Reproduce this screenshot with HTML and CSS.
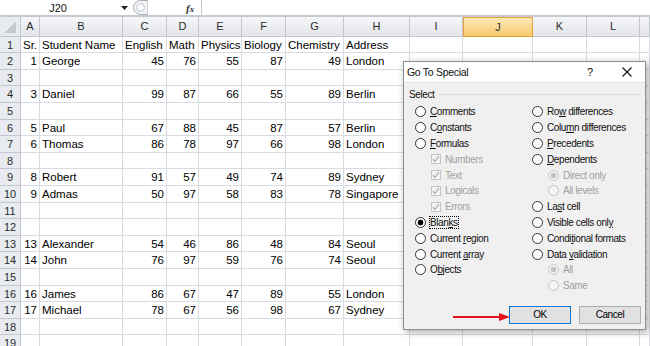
FILE: index.html
```html
<!DOCTYPE html>
<html lang="en">

<head>
    <meta charset="UTF-8">
    <meta name="viewport" content="width=device-width, initial-scale=1.0">
    <title>Go To Special - Blanks</title>
    <link rel="stylesheet" href="styles.css">
</head>

<body>
    <!-- Formula bar -->
    <div class="formula-bar">
        <div class="name-box">J20</div>
        <div class="name-arrow">
            <svg width="7" height="4" viewBox="0 0 7 4"><path d="M0 0h7L3.5 4z" fill="#222"/></svg>
        </div>
        <div class="splitter">
            <svg width="15" height="15" viewBox="0 0 15 15">
                <path d="M7.5 0.5A7 7 0 0 0 7.5 14.5H15V0.5z" fill="#f1f2f5" stroke="#a9aeb5"/>
                <circle cx="7.5" cy="7.5" r="4" fill="#fbfbfc" stroke="#bfc3c9"/>
            </svg>
        </div>
        <div class="fx">f<span>x</span></div>
        <div class="formula-input"></div>
    </div>

    <!-- Sheet -->
    <div class="sheet">
        <div class="row head">
            <span class="corner"></span><span>A</span><span>B</span><span>C</span><span>D</span><span>E</span><span>F</span><span>G</span><span>H</span><span>I</span><span class="sel">J</span><span>K</span><span>L</span><span></span>
        </div>
        <div class="row">
            <span class="rh">1</span><span>Sr.</span><span>Student Name</span><span>English</span><span>Math</span><span>Physics</span><span>Biology</span><span>Chemistry</span><span>Address</span><span></span><span></span><span></span><span></span><span></span>
        </div>
        <div class="row">
            <span class="rh">2</span><span class="n">1</span><span>George</span><span class="n">45</span><span class="n">76</span><span class="n">55</span><span class="n">87</span><span class="n">49</span><span>London</span><span></span><span></span><span></span><span></span><span></span>
        </div>
        <div class="row">
            <span class="rh">3</span><span></span><span></span><span></span><span></span><span></span><span></span><span></span><span></span><span></span><span></span><span></span><span></span><span></span>
        </div>
        <div class="row">
            <span class="rh">4</span><span class="n">3</span><span>Daniel</span><span class="n">99</span><span class="n">87</span><span class="n">66</span><span class="n">55</span><span class="n">89</span><span>Berlin</span><span></span><span></span><span></span><span></span><span></span>
        </div>
        <div class="row">
            <span class="rh">5</span><span></span><span></span><span></span><span></span><span></span><span></span><span></span><span></span><span></span><span></span><span></span><span></span><span></span>
        </div>
        <div class="row">
            <span class="rh">6</span><span class="n">5</span><span>Paul</span><span class="n">67</span><span class="n">88</span><span class="n">45</span><span class="n">87</span><span class="n">57</span><span>Berlin</span><span></span><span></span><span></span><span></span><span></span>
        </div>
        <div class="row">
            <span class="rh">7</span><span class="n">6</span><span>Thomas</span><span class="n">86</span><span class="n">78</span><span class="n">97</span><span class="n">66</span><span class="n">98</span><span>London</span><span></span><span></span><span></span><span></span><span></span>
        </div>
        <div class="row">
            <span class="rh">8</span><span></span><span></span><span></span><span></span><span></span><span></span><span></span><span></span><span></span><span></span><span></span><span></span><span></span>
        </div>
        <div class="row">
            <span class="rh">9</span><span class="n">8</span><span>Robert</span><span class="n">91</span><span class="n">57</span><span class="n">49</span><span class="n">74</span><span class="n">89</span><span>Sydney</span><span></span><span></span><span></span><span></span><span></span>
        </div>
        <div class="row">
            <span class="rh">10</span><span class="n">9</span><span>Admas</span><span class="n">50</span><span class="n">97</span><span class="n">58</span><span class="n">83</span><span class="n">78</span><span>Singapore</span><span></span><span></span><span></span><span></span><span></span>
        </div>
        <div class="row">
            <span class="rh">11</span><span></span><span></span><span></span><span></span><span></span><span></span><span></span><span></span><span></span><span></span><span></span><span></span><span></span>
        </div>
        <div class="row">
            <span class="rh">12</span><span></span><span></span><span></span><span></span><span></span><span></span><span></span><span></span><span></span><span></span><span></span><span></span><span></span>
        </div>
        <div class="row">
            <span class="rh">13</span><span class="n">13</span><span>Alexander</span><span class="n">54</span><span class="n">46</span><span class="n">86</span><span class="n">48</span><span class="n">84</span><span>Seoul</span><span></span><span></span><span></span><span></span><span></span>
        </div>
        <div class="row">
            <span class="rh">14</span><span class="n">14</span><span>John</span><span class="n">76</span><span class="n">97</span><span class="n">59</span><span class="n">76</span><span class="n">74</span><span>Seoul</span><span></span><span></span><span></span><span></span><span></span>
        </div>
        <div class="row">
            <span class="rh">15</span><span></span><span></span><span></span><span></span><span></span><span></span><span></span><span></span><span></span><span></span><span></span><span></span><span></span>
        </div>
        <div class="row">
            <span class="rh">16</span><span class="n">16</span><span>James</span><span class="n">86</span><span class="n">67</span><span class="n">47</span><span class="n">89</span><span class="n">55</span><span>London</span><span></span><span></span><span></span><span></span><span></span>
        </div>
        <div class="row">
            <span class="rh">17</span><span class="n">17</span><span>Michael</span><span class="n">78</span><span class="n">67</span><span class="n">56</span><span class="n">98</span><span class="n">67</span><span>Sydney</span><span></span><span></span><span></span><span></span><span></span>
        </div>
        <div class="row">
            <span class="rh">18</span><span></span><span></span><span></span><span></span><span></span><span></span><span></span><span></span><span></span><span></span><span></span><span></span><span></span>
        </div>
        <div class="row">
            <span class="rh">19</span><span></span><span></span><span></span><span></span><span></span><span></span><span></span><span></span><span></span><span></span><span></span><span></span><span></span>
        </div>
    </div>

    <!-- Go To Special dialog -->
    <div class="dialog">
        <div class="title">
            <span>Go To Special</span>
            <span class="help">?</span>
            <span class="close">
                <svg width="10" height="10" viewBox="0 0 10 10"><path d="M0.5 0.5l9 9M9.5 0.5l-9 9" stroke="#111" stroke-width="1.1"/></svg>
            </span>
        </div>
        <div class="body">
            <div class="legend"><span>Select</span></div>
            <div class="options">
                <div class="col">
                    <div class="opt"><i class="radio"></i><span><u>C</u>omments</span></div>
                    <div class="opt"><i class="radio"></i><span>C<u>o</u>nstants</span></div>
                    <div class="opt"><i class="radio"></i><span><u>F</u>ormulas</span></div>
                    <div class="opt sub off"><i class="check"><svg width="8" height="8" viewBox="0 0 8 8"><path d="M0.8 4.2l2.2 2.2 4.2-5.4" fill="none" stroke="#a9a9a9" stroke-width="1.1"/></svg></i><span>Numbers</span></div>
                    <div class="opt sub off"><i class="check"><svg width="8" height="8" viewBox="0 0 8 8"><path d="M0.8 4.2l2.2 2.2 4.2-5.4" fill="none" stroke="#a9a9a9" stroke-width="1.1"/></svg></i><span>Text</span></div>
                    <div class="opt sub off"><i class="check"><svg width="8" height="8" viewBox="0 0 8 8"><path d="M0.8 4.2l2.2 2.2 4.2-5.4" fill="none" stroke="#a9a9a9" stroke-width="1.1"/></svg></i><span>Logicals</span></div>
                    <div class="opt sub off"><i class="check"><svg width="8" height="8" viewBox="0 0 8 8"><path d="M0.8 4.2l2.2 2.2 4.2-5.4" fill="none" stroke="#a9a9a9" stroke-width="1.1"/></svg></i><span>Errors</span></div>
                    <div class="opt"><i class="radio on"></i><span class="focus">Blan<u>k</u>s</span></div>
                    <div class="opt"><i class="radio"></i><span>Current <u>r</u>egion</span></div>
                    <div class="opt"><i class="radio"></i><span>Current <u>a</u>rray</span></div>
                    <div class="opt"><i class="radio"></i><span>O<u>b</u>jects</span></div>
                </div>
                <div class="col">
                    <div class="opt"><i class="radio"></i><span>Ro<u>w</u> differences</span></div>
                    <div class="opt"><i class="radio"></i><span>Colu<u>m</u>n differences</span></div>
                    <div class="opt"><i class="radio"></i><span><u>P</u>recedents</span></div>
                    <div class="opt"><i class="radio"></i><span><u>D</u>ependents</span></div>
                    <div class="opt sub off"><i class="radio on"></i><span>Direct only</span></div>
                    <div class="opt sub off"><i class="radio"></i><span>All levels</span></div>
                    <div class="opt"><i class="radio"></i><span>La<u>s</u>t cell</span></div>
                    <div class="opt"><i class="radio"></i><span>Visible cells onl<u>y</u></span></div>
                    <div class="opt"><i class="radio"></i><span>Condi<u>t</u>ional formats</span></div>
                    <div class="opt"><i class="radio"></i><span>Data <u>v</u>alidation</span></div>
                    <div class="opt sub off"><i class="radio on"></i><span>All</span></div>
                    <div class="opt sub off"><i class="radio"></i><span>Same</span></div>
                </div>
            </div>
            <div class="buttons">
                <button class="ok">OK</button>
                <button>Cancel</button>
            </div>
        </div>
        <!-- annotation arrow -->
        <svg class="arrow" width="58" height="10" viewBox="0 0 58 10">
            <path d="M0 5H48" stroke="#e3131b" stroke-width="2"/>
            <path d="M46 1L57 5L46 9z" fill="#e3131b"/>
        </svg>
    </div>
</body>
</html>
```

FILE: styles.css
```css
body {
    margin: 0;
    width: 650px;
    height: 346px;
    overflow: hidden;
    position: relative;
    background: #fff;
    font-family: 'Liberation Sans', Arial, sans-serif;
    color: #000;
}

/* formula bar */
.formula-bar {
    display: flex;
    align-items: center;
    height: 15px;
    border-bottom: 2px solid #c6cad0;
    font-size: 11px;
}

.name-box {
    width: 116px;
    text-align: center;
    color: #111;
}

.name-arrow {
    width: 17px;
    display: flex;
    justify-content: center;
}

.splitter {
    width: 15px;
    height: 15px;
}

.splitter svg {
    display: block;
}

.fx {
    margin-left: 38px;
    width: 15px;
    font-family: 'Liberation Serif', serif;
    font-style: italic;
    font-weight: bold;
    font-size: 11px;
    color: #333;
}

.fx span {
    font-size: 9px;
}

.formula-input {
    flex: 1;
    height: 15px;
    border-left: 1px solid #c6cad0;
}

/* sheet grid */
.row {
    display: grid;
    grid-template-columns: 21px 19px 83px 44px 32px 43px 44px 58px 66px 53px 70px 54px 53px 1fr;
    height: 16.6px;
    font-size: 11.5px;
}

.row span {
    box-sizing: border-box;
    border-right: 1px solid #d9dbde;
    border-bottom: 1px solid #d9dbde;
    padding: 0 2px;
    line-height: 16.2px;
    white-space: nowrap;
    overflow: hidden;
}

.row .n {
    text-align: right;
}

.row .rh {
    background: #e8ebef;
    border-color: #c3c7cd;
    text-align: center;
    padding: 0;
    font-size: 11px;
    color: #2b2b2b;
}

.head {
    height: 19.7px;
}

.head span {
    background: linear-gradient(#f6f7f9, #e2e5e9);
    border-color: #c3c7cd;
    text-align: center;
    line-height: 18.7px;
    font-size: 11px;
    color: #2b2b2b;
}

.head .corner {
    background:
        linear-gradient(to bottom right, transparent 50%, #c5c9cf 50%) right 4px bottom 3px / 11px 11px no-repeat,
        #e8ebef;
}

.head .sel {
    background: linear-gradient(#fde9b4, #f7c96e);
    border: 1px solid #e3a23e;
}

/* dialog */
.dialog {
    position: absolute;
    left: 403px;
    top: 61px;
    width: 243px;
    height: 269px;
    box-sizing: border-box;
    border: 1px solid #8e8e8e;
    background: #f0f0f0;
    box-shadow: 2px 2px 7px rgba(0, 0, 0, 0.35);
    display: flex;
    flex-direction: column;
    font-size: 10px;
    letter-spacing: -0.4px;
    color: #111;
}

.title {
    display: flex;
    align-items: center;
    height: 20px;
    padding-left: 3px;
    background: #fff;
    border-bottom: 1px solid #e4e4e4;
    font-size: 10.5px;
    letter-spacing: -0.3px;
}

.help {
    margin-left: auto;
    width: 30px;
    text-align: center;
    font-size: 11px;
}

.close {
    width: 36px;
    margin-left: 4px;
    display: flex;
    justify-content: center;
}

.body {
    flex: 1;
    padding: 5px 4px 0 5px;
}

.legend {
    display: flex;
    align-items: center;
    gap: 5px;
    height: 12px;
}

.legend::after {
    content: "";
    flex: 1;
    border-top: 1px solid #d9d9d9;
}

.options {
    display: grid;
    grid-template-columns: 117px 1fr;
    margin-top: 4px;
    padding-left: 6px;
}

.col {
    display: grid;
    grid-auto-rows: 15.8px;
}

.opt {
    display: flex;
    align-items: center;
    gap: 4px;
    white-space: nowrap;
}

.opt.sub {
    padding-left: 16px;
}

.opt.off {
    color: #a0a0a0;
}

.radio {
    width: 11px;
    height: 11px;
    box-sizing: border-box;
    border: 1px solid #333;
    border-radius: 50%;
    background: #fff;
    flex: none;
}

.radio.on {
    background: radial-gradient(circle, #000 2.6px, #fff 3.2px);
}

.off .radio {
    border-color: #c4c4c4;
    background: #f4f4f4;
}

.off .radio.on {
    background: radial-gradient(circle, #c2c2c2 2.6px, #f4f4f4 3.2px);
}

.check {
    width: 10px;
    height: 10px;
    box-sizing: border-box;
    border: 1px solid #c4c4c4;
    background: #f4f4f4;
    flex: none;
    display: flex;
    align-items: center;
    justify-content: center;
}

.check svg {
    display: block;
}

.focus {
    outline: 1px dotted #000;
    outline-offset: 0;
}

.buttons {
    display: flex;
    justify-content: flex-end;
    gap: 8px;
    margin-top: 12px;
}

button {
    width: 62px;
    height: 18px;
    padding: 0;
    font: inherit;
    letter-spacing: inherit;
    color: #000;
    background: #e1e1e1;
    border: 1px solid #adadad;
}

button.ok {
    border-color: #0078d7;
}

.arrow {
    position: absolute;
    left: 49px;
    top: 250px;
}
```
